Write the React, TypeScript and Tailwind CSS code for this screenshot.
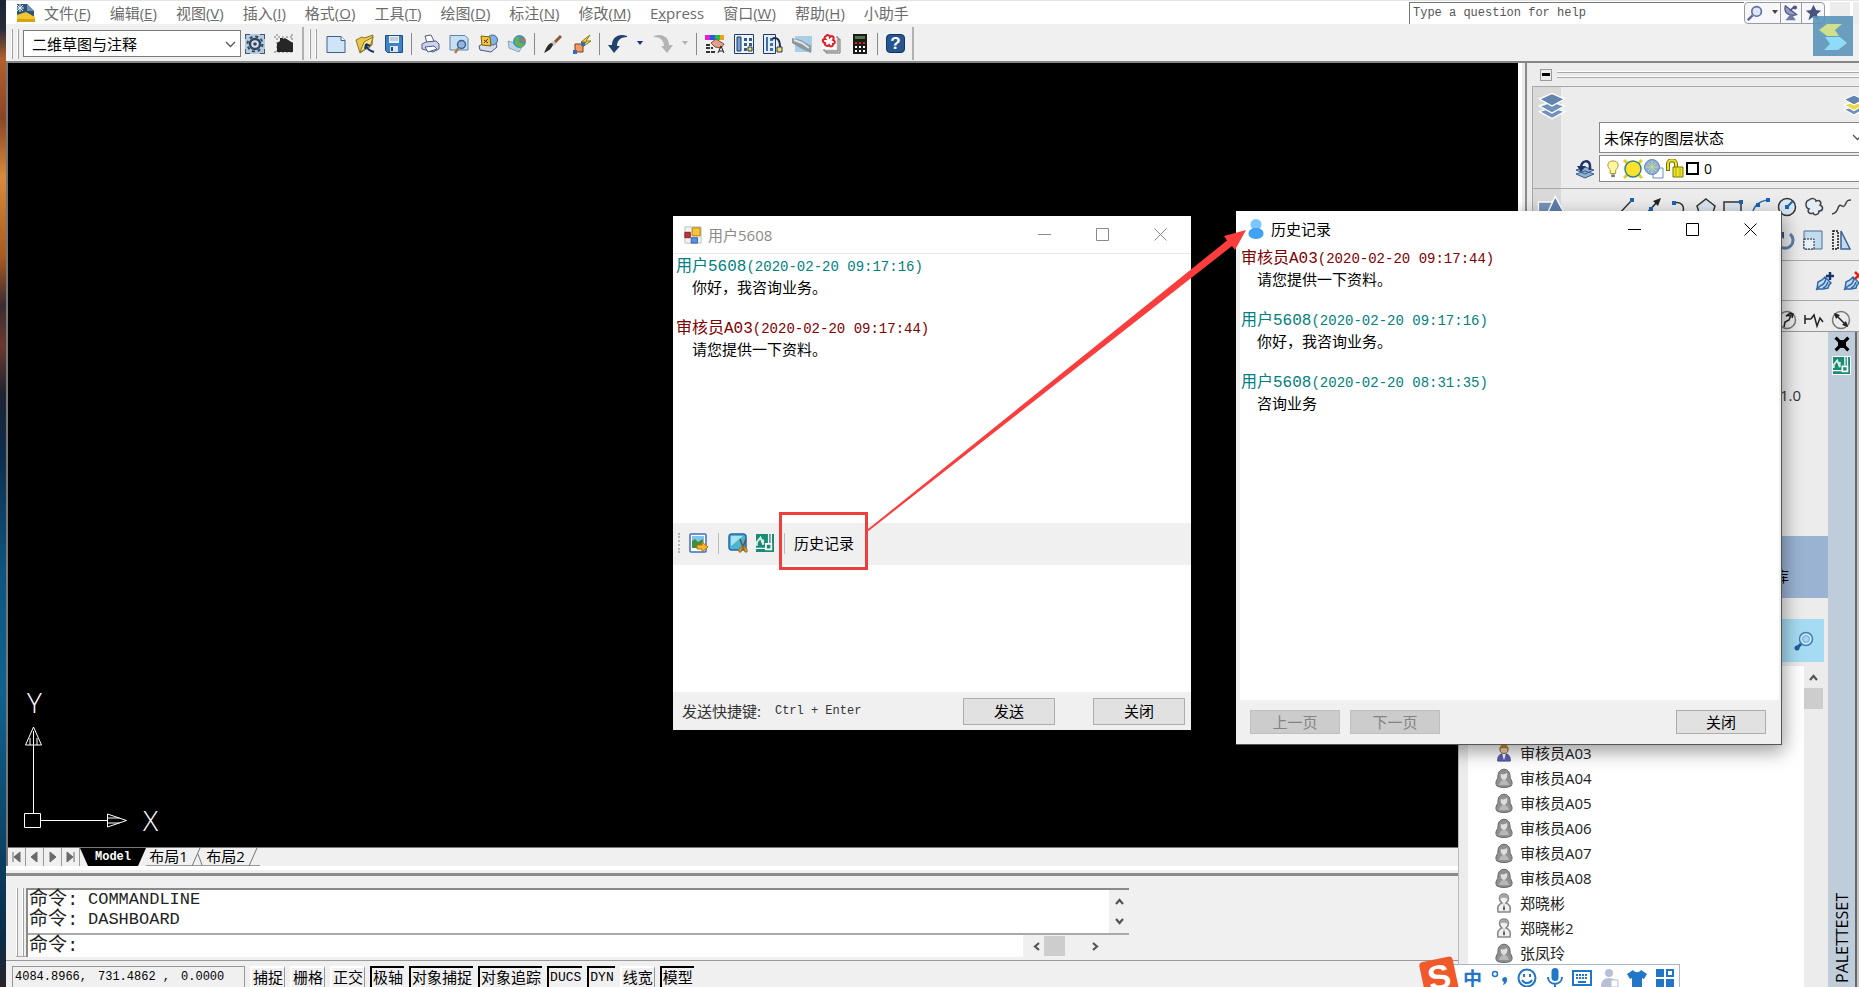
import React, { useState } from "react";

const menus = [
  { label: "文件", key: "F" },
  { label: "编辑", key: "E" },
  { label: "视图", key: "V" },
  { label: "插入", key: "I" },
  { label: "格式", key: "O" },
  { label: "工具", key: "T" },
  { label: "绘图", key: "D" },
  { label: "标注", key: "N" },
  { label: "修改", key: "M" },
  { label: "Express", key: "" },
  { label: "窗口", key: "W" },
  { label: "帮助", key: "H" },
  { label: "小助手", key: "" },
];

const statusToggles = [
  { label: "捕捉", on: false },
  { label: "栅格", on: false },
  { label: "正交", on: false },
  { label: "极轴", on: true },
  { label: "对象捕捉", on: true },
  { label: "对象追踪", on: true },
  { label: "DUCS", on: true },
  { label: "DYN", on: true },
  { label: "线宽", on: false },
  { label: "模型", on: true },
];

const contacts = [
  { name: "审核员A03", kind: "online" },
  { name: "审核员A04", kind: "female" },
  { name: "审核员A05", kind: "female" },
  { name: "审核员A06", kind: "female" },
  { name: "审核员A07", kind: "female" },
  { name: "审核员A08", kind: "female" },
  { name: "郑晓彬", kind: "male" },
  { name: "郑晓彬2", kind: "male" },
  { name: "张凤玲", kind: "female" },
];

interface Message {
  from: string;
  time: string;
  text: string;
  staff: boolean;
}

const chatMessages: Message[] = [
  { from: "用户5608", time: "(2020-02-20 09:17:16)", text: "你好，我咨询业务。", staff: false },
  { from: "审核员A03", time: "(2020-02-20 09:17:44)", text: "请您提供一下资料。", staff: true },
];

const historyMessages: Message[] = [
  { from: "审核员A03", time: "(2020-02-20 09:17:44)", text: "请您提供一下资料。", staff: true },
  { from: "用户5608", time: "(2020-02-20 09:17:16)", text: "你好，我咨询业务。", staff: false },
  { from: "用户5608", time: "(2020-02-20 08:31:35)", text: "咨询业务", staff: false },
];

const sans = "font-['Open_Sans','Noto_Sans_CJK_SC',sans-serif]";
const mono = "font-['Liberation_Mono','Noto_Sans_CJK_SC',monospace]";

const Icon = ({ size = 20, children }: { size?: number; children: React.ReactNode }) => (
  <svg width={size} height={size} viewBox="0 0 20 20" fill="none" className="shrink-0">
    {children}
  </svg>
);

// ---------- toolbar icons ----------
const NewIcon = () => (
  <Icon>
    <path d="M1 2.5h14l4 4v12H1z" fill="#cfe4f7" stroke="#3f628c" />
    <path d="M15 2.5v4h4" fill="#fff" stroke="#3f628c" />
  </Icon>
);
const OpenIcon = () => (
  <Icon>
    <path d="M1 6l6-3 2 1 9-3-1 10-12 8z" fill="#e9c84a" stroke="#8a742a" />
    <path d="M5 18L9 8l9-5-3 10z" fill="#f7e48a" stroke="#8a742a" />
    <path d="M11 11c1 4 4 6 8 7M11 10l-1 5m1-5l4 2" stroke="#1c355e" strokeWidth="2" />
  </Icon>
);
const SaveIcon = () => (
  <Icon>
    <path d="M1.500 1.500h17v17h-15l-2-2z" fill="#3c82c4" stroke="#1d4f85" />
    <path d="M5 2h10v7H5z" fill="#e8f2fb" />
    <path d="M6 4h8M6 6h8" stroke="#9ab" />
    <path d="M6 12h8v6H6z" fill="#dde6ef" />
    <path d="M7 13h2v4H7z" fill="#1d4f85" />
  </Icon>
);
const PrintIcon = () => (
  <Icon>
    <path d="M5 2l6-1 3 6-7 2z" fill="#fff" stroke="#4d5a86" />
    <path d="M2 10l4-2 10-1 3 3v5l-6 3-11-3z" fill="#cdd4ee" stroke="#4d5a86" />
    <path d="M5 13l9-1 3 3-9 3z" fill="#fff" stroke="#4d5a86" />
  </Icon>
);
const PreviewIcon = () => (
  <Icon>
    <path d="M1 1.500h15l3 3V16H1z" fill="#c7e0f5" stroke="#5c84ac" />
    <circle cx="12.500" cy="10.500" r="4" fill="#8fb8e2" stroke="#3f628c" strokeWidth="1.500" />
    <path d="M9.500 14L6 19" stroke="#b07a4a" strokeWidth="2.500" />
  </Icon>
);
const PublishIcon = () => (
  <Icon>
    <path d="M1 12l5-3h12l1 4-6 5-11-2z" fill="#d7dcec" stroke="#4d5a86" />
    <circle cx="14.500" cy="6" r="5" fill="#7fb5e6" stroke="#3d668f" />
    <path d="M3 2l9 1 1 9-9-1z" fill="#f4c637" stroke="#7a6010" />
    <path d="M6 6l4 3M10 5l-4 4" stroke="#4a3a08" />
  </Icon>
);
const GlobeIcon = () => (
  <Icon>
    <path d="M1 7l10 3 7-3-6 11-10-4z" fill="#bdd4e8" stroke="#8ba7c4" />
    <circle cx="12.500" cy="7.500" r="6.500" fill="#3f96bd" />
    <path d="M8 4c3-3 5 0 4 3s4 1 5 4c-3 4-6 2-9-1z" fill="#6bb04c" />
    <path d="M14 3l4 2v3l-4-1z" fill="#c76a3c" />
  </Icon>
);
const BrushIcon = () => (
  <Icon>
    <path d="M18 2L9 11" stroke="#8d5a33" strokeWidth="3" />
    <path d="M12 8l-3 3" stroke="#c9c9c9" strokeWidth="4" />
    <path d="M10 10c-1 5-5 7-9 9 2-4 3-8 7-10z" fill="#2b2b2b" />
  </Icon>
);
const MatchIcon = () => (
  <Icon>
    <path d="M18 1l-9 7h5l-5 6 10-7h-5z" fill="#ffd93a" stroke="#8f7414" />
    <path d="M3 10h8v8H3z" fill="#f59a5e" stroke="#7c3d1b" />
    <path d="M1 16h4v4H1zM9 8h4v4H9z" fill="#2e6fc0" />
  </Icon>
);
const UndoIcon = ({ flip = false }: { flip?: boolean }) => (
  <Icon>
    <g transform={flip ? "translate(20 0) scale(-1 1)" : undefined}>
      <path d="M19 2C10-1 4 4 4 11H0l6 8 6-7H9c0-5 3-9 10-9z" fill={flip ? "#b4b4b4" : "#24416e"} />
    </g>
  </Icon>
);
const DropArrow = ({ color }: { color: string }) => (
  <svg width="8" height="5" viewBox="0 0 8 5">
    <path d="M1 0h6L4 4z" fill={color} />
  </svg>
);
const PropertiesIcon = () => (
  <Icon>
    <path d="M0 1h5v5H0z" fill="#e21fd2" />
    <path d="M5 1h5v5H5z" fill="#2b58e0" />
    <path d="M10 1h5v5h-5z" fill="#23bd45" />
    <path d="M15 1h4v5h-4z" fill="#f0a21f" />
    <path d="M6 9l5-4 8 5-3 4-6-1z" fill="#e0a08c" stroke="#8b4d3c" />
    <path d="M1 11h5M1 14h7M1 18h9" stroke="#333" strokeWidth="2" strokeDasharray="4 1" />
    <path d="M13 19l3-7 3 7m-5-2h4" stroke="#222" />
  </Icon>
);
const DesignCenterIcon = () => (
  <Icon>
    <path d="M.5.5h19v19H.5z" fill="#eef4fb" stroke="#223b63" />
    <path d="M3 3h4v14H3z" fill="#6f9dd0" stroke="#223b63" />
    <path d="M10 4h3v3h-3zM15 4h3v3h-3zM10 9h3v3h-3zM15 9h3v3h-3zM10 14h3v3h-3z" fill="#3a5a8a" />
    <path d="M14 13h4v4h-4z" fill="#f1df58" stroke="#223b63" />
  </Icon>
);
const ToolPaletteIcon = () => (
  <Icon>
    <path d="M.5.5h12v19H.5z" fill="#e4eefa" stroke="#223b63" />
    <path d="M3 3h2v14H3z" fill="#3e6fae" />
    <path d="M7 4h3v3H7zM7 9h3v3H7zM7 14h3v3H7z" fill="#3e6fae" />
    <path d="M9 5c5-3 8 1 8 8" stroke="#1d2f52" strokeWidth="2" />
    <path d="M14 13h5v5h-5z" fill="#f1df58" stroke="#223b63" />
  </Icon>
);
const SheetSetIcon = () => (
  <Icon>
    <path d="M3 2h17v16H3z" fill="#a9cfe6" />
    <path d="M0 4l9 2 10 6v7l-9-4-10-6z" fill="#8d979d" />
    <path d="M2 6l8 3 7 5" stroke="#dde3e6" strokeWidth="2" />
  </Icon>
);
const MarkupIcon = () => (
  <Icon>
    <path d="M5 5h14v14H5z" fill="#d5d5d5" stroke="#777" />
    <path d="M3 3h14v14H3z" fill="#e8e8e8" stroke="#777" />
    <path d="M1 1h14v14H1z" fill="#fff" />
    <path d="M5 2c2-2 4 0 4 1 2-2 5 0 3 3 3 1 2 4 0 4 0 3-3 3-4 1-2 2-5 0-4-2-3-1-3-4 0-4-1-1 0-3 1-3z" stroke="#e01f2a" strokeWidth="2" />
  </Icon>
);
const CalcIcon = () => (
  <Icon>
    <path d="M3 0h14v20H3z" fill="#1a1a1a" />
    <path d="M5 2h10v3H5z" fill="#4f7a45" />
    <path d="M5 8h2v2H5zM9 8h2v2H9zM13 8h2v2h-2z" fill="#d3262d" />
    <path d="M5 12h2v2H5zM9 12h2v2H9zM13 12h2v2h-2zM5 16h2v2H5zM9 16h2v2H9zM13 16h2v2h-2z" fill="#fff" />
  </Icon>
);
const HelpIcon = () => (
  <span className="flex h-[19px] w-[19px] items-center justify-center rounded-sm border border-[#12335f] bg-[#27558f] font-['Liberation_Sans',sans-serif] text-[17px] font-bold leading-none text-white">
    ?
  </span>
);
const CadIcon = ({ size = 18 }: { size?: number }) => (
  <Icon size={size}>
    <path d="M0 0h20v20H0z" fill="#1c8a74" />
    <path d="M1 13V9l4-5 3 8V6" stroke="#d6f3ea" strokeWidth="2" />
    <path d="M0 16h10M14 0v10M17 0v10" stroke="#fff" strokeWidth="1.500" />
    <path d="M11 11h6v6h-6z" fill="#1c8a74" stroke="#fff" strokeWidth="2" />
  </Icon>
);

const toolbarItems: { id: string; icon?: React.ReactNode }[] = [
  { id: "新建", icon: <NewIcon /> },
  { id: "打开", icon: <OpenIcon /> },
  { id: "保存", icon: <SaveIcon /> },
  { id: "sep1" },
  { id: "打印", icon: <PrintIcon /> },
  { id: "打印预览", icon: <PreviewIcon /> },
  { id: "发布", icon: <PublishIcon /> },
  { id: "三维DWF", icon: <GlobeIcon /> },
  { id: "sep2" },
  { id: "特性匹配", icon: <BrushIcon /> },
  { id: "块编辑器", icon: <MatchIcon /> },
  { id: "sep3" },
  { id: "放弃", icon: <UndoIcon /> },
  { id: "drop-undo", icon: <DropArrow color="#1c2f80" /> },
  { id: "重做", icon: <UndoIcon flip /> },
  { id: "drop-redo", icon: <DropArrow color="#b4b4b4" /> },
  { id: "sep4" },
  { id: "特性", icon: <PropertiesIcon /> },
  { id: "设计中心", icon: <DesignCenterIcon /> },
  { id: "工具选项板", icon: <ToolPaletteIcon /> },
  { id: "图纸集", icon: <SheetSetIcon /> },
  { id: "标记集", icon: <MarkupIcon /> },
  { id: "计算器", icon: <CalcIcon /> },
  { id: "sep5" },
  { id: "帮助", icon: <HelpIcon /> },
];

const Grip = () => (
  <div className="flex h-[30px] gap-1">
    <div className="w-[2px] border-r border-[#a0a0a0] bg-white" />
    <div className="w-[2px] border-r border-[#a0a0a0] bg-white" />
  </div>
);

const Chevron = ({ className = "", bold = false }: { className?: string; bold?: boolean }) => (
  <svg width="11" height="7" viewBox="0 0 11 7" fill="none" className={className}>
    <path d={bold ? "M2 1l3.500 4L9 1" : "M1 1l4.500 4.500L10 1"} stroke="#555" strokeWidth={bold ? 2.2 : 1.3} />
  </svg>
);

const MenuBar = () => (
  <header className="flex h-6 items-center border-t border-[#e4e4e4] bg-white">
    <svg width="20" height="20" viewBox="0 0 20 20" className="ml-[10px] mr-2">
      <path d="M1 1h10l7 7v10H1z" fill="#2d5376" />
      <path d="M11 1l7 7h-7z" fill="#6d93b3" />
      <path d="M4 1v8M0 5h8M1 2l6 6M7 2L1 8" stroke="#e5f2fb" />
      <path d="M1 12l9-3 9 5v5H1z" fill="#f3c62e" />
      <path d="M1 16h18v3H1z" fill="#d9a012" />
    </svg>
    <nav className="flex gap-[19px]">
      {menus.map((menu) => (
        <button key={menu.label} className={`${sans} whitespace-nowrap text-[15px] leading-5 text-[#6b6b6b]`}>
          {menu.label === "Express" ? (
            <>E<u>x</u>press</>
          ) : (
            menu.label
          )}
          {menu.key && <>(<u>{menu.key}</u>)</>}
        </button>
      ))}
    </nav>
    <div className="ml-auto flex h-[22px] items-stretch">
      <input
        aria-label="Help search"
        defaultValue="Type a question for help"
        className={`${mono} w-[335px] border-l border-t border-[#777] bg-white pl-[3px] text-[12px] text-[#555] outline-none`}
      />
      <div className="flex w-[81px] overflow-hidden rounded border border-[#9a9aa6] bg-[#f7f7fa]">
        <button aria-label="Search" className="flex w-9 items-center justify-center gap-2 border-r border-[#9a9aa6]">
          <Icon size={16}>
            <circle cx="12" cy="8" r="6" fill="#dfe6f8" stroke="#5d6a9c" strokeWidth="2" />
            <path d="M7 13l-6 6" stroke="#5d6a9c" strokeWidth="3" />
          </Icon>
          <DropArrow color="#444" />
        </button>
        <button aria-label="Communication" className="flex w-[21px] items-center justify-center border-r border-[#9a9aa6]">
          <Icon size={16}>
            <path d="M3 1c-3 9 5 14 14 11z" fill="#8f9cc4" stroke="#4a5687" strokeWidth="1.500" />
            <path d="M9 7l5-5" stroke="#4a5687" strokeWidth="2" />
            <circle cx="15" cy="3" r="2.500" fill="#4a5687" />
            <path d="M8 13l-5 6h13l-4-6z" fill="#6d7bab" />
          </Icon>
        </button>
        <button aria-label="Favorites" className="flex flex-1 items-center justify-center">
          <Icon size={17}>
            <path d="M10 1l3 6 6 1-5 4 2 7-6-4-6 4 2-7-5-4 6-1z" fill="#46557f" />
          </Icon>
        </button>
      </div>
      <div className="ml-[5px] flex w-[29px] gap-[3px]">
        <div className="w-5 bg-[#ececec]" />
        <div className="flex-1 bg-[#ececec]" />
      </div>
    </div>
  </header>
);

const Toolbar = () => (
  <div className="flex h-[39px] items-center border-b-2 border-[#868686] bg-[#f0f0f0] pl-[5px] pt-[2px]">
    <Grip />
    <div className="relative ml-1 w-[218px]">
      <select
        aria-label="工作空间"
        className={`${sans} h-[27px] w-full appearance-none border border-[#7a7a7a] bg-white pl-2 text-[15px] leading-5 text-black outline-none`}
      >
        <option>二维草图与注释</option>
      </select>
      <Chevron className="pointer-events-none absolute right-[5px] top-[11px]" />
    </div>
    <div className="flex h-[33px] items-center gap-[9px] border-r-2 border-[#b0b0b0] pl-1 pr-2">
      <button aria-label="工作空间设置">
        <Icon>
          <path d="M0 0h20v20H0z" fill="#b3cbe2" />
          <path d="M0 5V0h5M15 0h5v5M20 15v5h-5M5 20H0v-5" stroke="#47586c" strokeWidth="2" />
          <circle cx="10" cy="10" r="5" fill="#d8e6f3" stroke="#33465c" strokeWidth="2.500" />
          <circle cx="10" cy="10" r="7.500" stroke="#33465c" strokeWidth="2" strokeDasharray="3 2.900" />
          <circle cx="10" cy="10" r="1.800" fill="#33465c" />
        </Icon>
      </button>
      <button aria-label="我的工作空间">
        <Icon>
          <path d="M0 3h20M0 18h20M3 0v20M18 0v20" stroke="#777" strokeDasharray="2 2" />
          <path d="M3 9l3-2V4h3v1l2-1 8 5v9H3z" fill="#262626" />
        </Icon>
      </button>
    </div>
    <div className="ml-[5px] flex h-[33px] items-center border-r-2 border-[#b0b0b0] pr-[2px]">
      <Grip />
      <div className="ml-1 flex items-center">
        {toolbarItems.map((item) =>
          !item.icon ? (
            <div key={item.id} className="flex w-[7px] justify-center">
              <div className="h-[22px] w-px bg-[#8a8a8a]" />
            </div>
          ) : (
            <button
              key={item.id}
              aria-label={item.id}
              className={`flex h-[29px] items-center justify-center ${item.id.startsWith("drop") ? "w-4" : "w-[29px]"}`}
            >
              {item.icon}
            </button>
          )
        )}
      </div>
    </div>
  </div>
);

const LayersIcon = ({ size, accent = "#6f92bd" }: { size: number; accent?: string }) => (
  <Icon size={size}>
    <path d="M1 14l9-3 9 3-9 5z" fill="#6f92bd" stroke="#fff" />
    <path d="M1 10l9-3 9 3-9 5z" fill={accent} stroke="#fff" />
    <path d="M1 5l9-4 9 4-9 5z" fill="#6384ad" stroke="#fff" />
  </Icon>
);

const drawTools: React.ReactNode[] = [
  <><path d="M2 19L17 3" stroke="#333" strokeWidth="1.500" /><path d="M15 1h4v4h-4z" fill="#1c64b4" /></>,
  <><path d="M2 19L17 3" stroke="#222" strokeWidth="1.500" /><path d="M19 1l-8 3 5 5z" fill="#222" /><path d="M7 10h4v4H7z" fill="#1c64b4" /></>,
  <><path d="M5 6c7-2 12 3 8 11" stroke="#333" strokeWidth="1.500" /><path d="M3 4h4v4H3z" fill="#1c64b4" /></>,
  <path d="M10 2l9 7-3 10H4L1 9z" stroke="#333" strokeWidth="1.500" fill="#dce6f0" />,
  <><path d="M1 5h17v13H1z" stroke="#333" strokeWidth="1.500" fill="#dce6f0" /><path d="M16 3h4v4h-4z" fill="#1c64b4" /></>,
  <><path d="M2 19C3 9 9 4 18 3" stroke="#2d6fb0" strokeWidth="1.500" /><path d="M16 1h4v4h-4zM6 6h4v4H6z" fill="#1c64b4" /></>,
  <><circle cx="10" cy="10" r="8.500" stroke="#333" strokeWidth="1.500" fill="#dbe8f5" /><path d="M10 10l6-6" stroke="#1c64b4" strokeWidth="2" /><path d="M8 8h4v4H8z" fill="#1c64b4" /></>,
  <path d="M5 3c3-3 7-1 7 1 4-2 6 2 4 4 4 2 3 6-1 6 0 4-5 5-6 2-4 2-6-2-4-4-4-1-4-8 0-9z" stroke="#444" strokeWidth="1.500" fill="#e3edf6" />,
  <path d="M1 17c6-1 5-5 7-8s4 3 6-1 2-5 6-5" stroke="#444" strokeWidth="1.500" />,
];

const Dashboard = () => (
  <aside className="flex w-[341px] shrink-0 border-l-4 border-white bg-[#ececec]">
    <div className="w-[5px] border-r-2 border-[#8a8a8a]" />
    <div className="flex min-w-0 flex-1 flex-col pl-[5px]">
      <div className="flex h-[23px] items-center gap-[5px] pl-2">
        <button aria-label="折叠" className="flex h-3 w-3 items-center justify-center border border-[#999]">
          <span className="h-[3px] w-2 bg-black" />
        </button>
        <div className="flex h-[7px] flex-1 flex-col justify-between">
          <div className="h-[2px] border-b border-[#aaa] bg-white" />
          <div className="h-[2px] border-b border-[#aaa] bg-white" />
        </div>
      </div>
      {/* Layers */}
      <section className="flex h-[102px] border-l border-t border-[#a8a8a8]">
        <div className="w-7 shrink-0 bg-[#d9d9d9] pl-[5px] pt-[5px]">
          <LayersIcon size={28} />
        </div>
        <div className="flex min-w-0 flex-1 flex-col overflow-hidden">
          <div className="flex h-[35px] items-center justify-end">
            <div className="-mr-[6px] h-[22px]"><LayersIcon size={22} accent="#f2d83c" /></div>
          </div>
          <div className="flex flex-col gap-[2px]">
            <div className="relative ml-[38px]">
              <select aria-label="图层状态" className={`${sans} h-[31px] w-full appearance-none border border-r-0 border-[#888] bg-white pl-1 text-[15px] leading-5 text-black outline-none`}>
                <option>未保存的图层状态</option>
              </select>
              <Chevron className="pointer-events-none absolute -right-1 top-3" />
            </div>
            <div className="flex items-center">
              <div className="flex w-[38px] justify-center pl-[10px]">
                <Icon>
                  <path d="M1 15l9-3 9 3-9 4zM1 11l9-3 9 3-9 4z" fill="#8fb0d2" stroke="#3c5f88" />
                  <path d="M6 9c0-8 9-9 9-2v4" stroke="#1d3566" strokeWidth="2.500" />
                  <path d="M2 7h9l-5 6z" fill="#1d3566" />
                </Icon>
              </div>
              <button aria-label="当前图层" className={`${sans} flex h-[27px] flex-1 items-center gap-[1px] border border-r-0 border-[#888] bg-white pl-1`}>
                <Icon size={18}>
                  <path d="M10 1c-7 0-7 7-3 10v4h6v-4c4-3 4-10-3-10z" fill="#fff7a0" stroke="#a08d20" />
                  <path d="M8 16h4v3H8z" fill="#777" />
                </Icon>
                <Icon>
                  <path d="M1 1l4 4M19 1l-4 4M1 19l4-4M19 19l-4-4" stroke="#e0d020" strokeWidth="3" />
                  <circle cx="10" cy="10" r="8" fill="#fbe32c" stroke="#3a8088" strokeWidth="1.500" />
                </Icon>
                <Icon>
                  <path d="M9 9h10v10H9z" fill="#fff" stroke="#6c8fc0" />
                  <circle cx="8" cy="8" r="7.500" fill="#8fb0d6" stroke="#6287b8" />
                  <path d="M8 2v12M2 8h12M4 4l8 8M12 4l-8 8" stroke="#cadb8a" />
                </Icon>
                <Icon>
                  <path d="M3 12V5c0-5 8-5 8 0v4" stroke="#77730a" strokeWidth="4" />
                  <path d="M3 11V5c0-5 8-5 8 0v4" stroke="#e8e22e" strokeWidth="2" />
                  <path d="M8 8h10v10H8z" fill="#e8e22e" stroke="#77730a" />
                  <path d="M11 8v10M15 8v10" stroke="#b5b000" />
                </Icon>
                <span className="h-[13px] w-[13px] border-2 border-black bg-white" />
                <span className="pl-1 text-[14px] leading-5 text-black">0</span>
              </button>
            </div>
          </div>
        </div>
      </section>
      {/* Draw and modify */}
      <section className="flex h-[72px] overflow-hidden border-l border-t border-[#a8a8a8]">
        <div className="w-7 shrink-0 bg-[#d9d9d9] pl-1 pt-[6px]">
          <Icon size={28}>
            <path d="M1 5h10v12H1z" fill="#7793b8" stroke="#fff" />
            <path d="M13 1l7 13H7z" fill="#5f7fab" stroke="#fff" />
          </Icon>
        </div>
        <div className="flex flex-col gap-[13px] pl-[54px] pt-2">
          <div className="flex gap-[7px]">
            {drawTools.map((shape, i) => (
              <Icon key={i}>{shape}</Icon>
            ))}
          </div>
          <div className="flex justify-end gap-2">
            <Icon>
              <path d="M5 4a8 8 0 1 0 10 0" stroke="#5d7fae" strokeWidth="3" />
              <path d="M1 2h8v7z" fill="#34527f" />
            </Icon>
            <Icon>
              <path d="M1 1h18v18H1z" fill="#c3dbef" stroke="#4a6c94" />
              <path d="M1 9h10v10H1z" fill="#e8f1f8" stroke="#222" strokeDasharray="2 1" />
            </Icon>
            <Icon>
              <path d="M2 1h5v18H2z" stroke="#111" strokeWidth="1.500" strokeDasharray="2 1" />
              <path d="M10 1l9 18h-9z" fill="#c3dbef" stroke="#3e6290" strokeWidth="1.500" />
            </Icon>
          </div>
        </div>
      </section>
      <section className="-mr-1 flex h-10 items-center justify-end gap-2 overflow-hidden border-t border-[#a8a8a8]">
        {["#16336b", "#e02020"].map((color) => (
          <Icon key={color}>
            <path d="M2 18l1-7 4-2 3-3 6 6-2 2-1 3-5 1z" fill="#c4dcf2" stroke="#2f68a8" strokeWidth="1.500" />
            <path d="M5 15c3-1 5-3 6-7M8 17c3-1 4-3 5-6M1 19l4-4" stroke="#2f68a8" strokeWidth="1.500" />
            {color === "#16336b" ? (
              <path d="M15 1v8M11 5h8" stroke={color} strokeWidth="2.500" />
            ) : (
              <path d="M12 1l7 7M19 1l-7 7" stroke={color} strokeWidth="2.500" />
            )}
          </Icon>
        ))}
      </section>
      <section className="flex h-8 items-center justify-end gap-[7px] border-t border-[#a8a8a8] pr-2 pt-[7px]">
        <Icon>
          <circle cx="10" cy="10" r="8.500" stroke="#777" strokeWidth="1.500" />
          <path d="M7 17l1-5 4-2 2-5-5 1 4-3 3 1-1 4" stroke="#222" strokeWidth="1.500" />
        </Icon>
        <Icon>
          <path d="M1 5v9M1 9h6M7 9l3-4 3 11 3-8 3 4" stroke="#222" strokeWidth="1.500" />
        </Icon>
        <Icon>
          <circle cx="10" cy="10" r="8.500" stroke="#777" strokeWidth="1.500" />
          <path d="M4 4l12 12" stroke="#222" strokeWidth="1.500" />
          <path d="M3 3l6 2-4 4zM17 17l-6-2 4-4z" fill="#222" />
        </Icon>
      </section>
    </div>
  </aside>
);

const UcsIcon = () => (
  <svg width="168" height="168" viewBox="0 0 168 168" fill="none" stroke="#fff">
    <path d="M16.500 150.500h16v-14h-16zM25.500 136V68M25.500 50l-8 18h16zM25.500 54v14M22 61v7M29 61v7" />
    <path d="M33 143.500h66M99.500 137v13l19-6.500zM99.500 141h12M99.500 146h12" />
    <text x="19" y="36" stroke="none" fill="#fff" className="font-['Open_Sans',sans-serif] text-[28px] font-light">Y</text>
    <text x="135" y="154" stroke="none" fill="#fff" className="font-['Open_Sans',sans-serif] text-[28px] font-light">X</text>
  </svg>
);

const LayoutTabs = () => (
  <div className="flex h-[19px] border-t border-[#777] bg-[#f0f0f0]">
    {["M2 1v10M9 1v10L3 6z", "M8 1v10L2 6z", "M3 1v10l6-5z", "M9 1v10M2 1v10l6-5z"].map((d, i) => (
      <button key={i} aria-label={`tab-nav-${i}`} className="flex h-[18px] w-[18px] items-center justify-center border-r border-[#999]">
        <svg width="11" height="12" viewBox="0 0 11 12">
          <path d={d} fill="#6a6a6a" stroke="#6a6a6a" />
        </svg>
      </button>
    ))}
    <button className="flex h-[18px]">
      <svg width="8" height="18"><path d="M0 0h8v18z" fill="#000" /></svg>
      <span className={`${mono} w-[50px] bg-black text-center text-[12px] font-bold leading-[18px] text-white`}>Model</span>
      <svg width="8" height="18"><path d="M0 0h8L0 18z" fill="#000" /></svg>
    </button>
    {["布局1", "布局2"].map((tab) => (
      <button key={tab} className={`${sans} flex h-[18px] border-b border-[#999] text-[15px] leading-[17px] text-black`}>
        <span className="w-[45px] text-center">{tab}</span>
        <svg width="12" height="18" fill="none">
          <path d={tab === "布局2" ? "M9 0L1 18" : "M9 0L1 18M7 6l4 11"} stroke="#777" />
        </svg>
      </button>
    ))}
  </div>
);

const CommandLine = () => (
  <div className="flex border-t-[3px] border-[#8a8a8a] bg-[#f0f0f0] pb-[3px] pl-[10px] pt-3">
    <div className="flex w-[10px] gap-1 border-b border-[#aaa]">
      <div className="w-[2px] border-r border-[#a0a0a0] bg-white" />
      <div className="w-[2px] border-r border-[#a0a0a0] bg-white" />
    </div>
    <div className="w-[1103px] border-l-2 border-t-2 border-[#8a8a8a] bg-[#f0f0f0]">
      <div className="flex h-[45px] border-b-2 border-[#aaa]">
        <div className={`${mono} flex-1 bg-white pl-px text-[17px] leading-[20px] text-[#222]`}>
          {["COMMANDLINE", "DASHBOARD"].map((command) => (
            <p key={command} className="flex">
              <span className="w-[59px] whitespace-pre text-[19px]">命令:</span>
              {command}
            </p>
          ))}
        </div>
        <div className="flex w-5 flex-col items-center justify-between py-2">
          <Chevron bold className="rotate-180" />
          <Chevron bold />
        </div>
      </div>
      <div className="flex h-[22px]">
        <label htmlFor="command" className={`${mono} bg-white pl-px text-[19px] leading-[22px] text-[#222]`}>命令:</label>
        <input id="command" className="min-w-0 flex-1 bg-white outline-none" />
        <div className="flex w-[86px] items-center justify-between px-2">
          <Chevron bold className="rotate-90" />
          <div className="mr-6 h-5 w-[21px] bg-[#cdcdcd]" />
          <Chevron bold className="-rotate-90" />
        </div>
        <div className="w-5" />
      </div>
    </div>
  </div>
);

const StatusBar = () => (
  <footer className="flex h-[27px] border-t border-[#999] bg-[#f0f0f0] pl-[6px] pt-[5px]">
    <div className={`${mono} flex w-[233px] gap-[11px] border-l border-r border-t border-[#999] pl-[2px] text-[12px] leading-[20px] text-black`}>
      <span>4084.8966,</span>
      <span>731.4862 ,</span>
      <span>0.0000</span>
    </div>
    <div className="ml-[5px] flex gap-[5px]">
      {statusToggles.map((toggle) => (
        <button
          key={toggle.label}
          className={`whitespace-nowrap border-l-2 border-t-2 px-px leading-[19px] text-black ${
            toggle.on ? "border-black" : "border-r border-l-white border-r-[#999] border-t-white"
          } ${/[A-Z]/.test(toggle.label) ? "font-['Liberation_Mono',monospace] text-[13px]" : `${sans} text-[15px]`}`}
        >
          {toggle.label}
        </button>
      ))}
    </div>
  </footer>
);

const PersonIcon = ({ kind }: { kind: string }) => {
  if (kind === "online") {
    return (
      <Icon size={18}>
        <path d="M3 19c0-6 2-8 7-8s7 2 7 8z" fill="#5b62b5" stroke="#3e4487" />
        <path d="M8 11h4l-2 7z" fill="#fff" />
        <circle cx="10" cy="6" r="4.500" fill="#f5d3a8" stroke="#7b5a33" />
        <path d="M5 6c0-7 10-7 10 0-3-2-7-2-10 0z" fill="#c4882a" />
      </Icon>
    );
  }
  if (kind === "male") {
    return (
      <Icon size={20}>
        <path d="M4 19c-1-5 1-8 4-9-4-3-3-9 2-9s6 6 2 9c3 1 5 4 4 9z" fill="#f0f0f0" stroke="#888" strokeWidth="1.500" />
        <path d="M6 6c1-6 8-5 8 0-3-1-5-2-8 0z" fill="#a5a5a5" />
        <path d="M10 11l1 5-1 2-1-2z" fill="#444" />
      </Icon>
    );
  }
  return (
    <Icon size={20}>
      <path d="M3 18c-3-4 1-6 1-10C4-1 16-1 16 8c0 4 4 6 1 10-4 2-10 2-14 0z" fill="#909090" stroke="#666" />
      <path d="M5 17c1-4 3-5 5-5s4 1 5 5z" fill="#b8b8b8" />
      <path d="M7 6c2 1 4 0 6-1 1 4-1 7-3 7s-4-3-3-6z" fill="#dedede" />
    </Icon>
  );
};

const ContactPalette = () => (
  <aside className={`${sans} absolute bottom-0 right-0 top-[331px] flex w-[401px] border-t border-[#999] bg-[#ececec]`}>
    <div className="flex min-w-0 flex-1 flex-col border-l border-[#bbb]">
      <div className="flex h-[204px] items-start justify-end pr-[27px] pt-[53px] text-[15px] leading-5 text-[#333]">1.0</div>
      <div className="flex h-[62px] justify-end bg-[#9ab3d3] pr-[39px] pt-[30px] text-[15px] leading-5 text-black">库</div>
      <div className="ml-[9px] mr-1 mt-[21px] flex h-[43px] items-center justify-end bg-[#a6dcf3] pr-[10px]">
        <Icon>
          <circle cx="12" cy="8" r="6.500" fill="#d4ebfb" stroke="#3d7fb8" strokeWidth="1.500" />
          <circle cx="12" cy="8" r="3.500" fill="#a9d2f0" stroke="#6aa7d8" />
          <path d="M7 13l-4 4" stroke="#1d5d9c" strokeWidth="3" />
          <circle cx="3" cy="17" r="2.500" fill="#1d5d9c" />
        </Icon>
      </div>
      <div className="ml-[9px] mt-1 flex min-h-0 flex-1 overflow-hidden">
        <ul className="flex-1 bg-white pl-[26px] pt-[74px]">
          {contacts.map((contact) => (
            <li key={contact.name}>
              <button className="flex h-[25px] items-center text-[15px] leading-5 text-[#222]">
                <span className="flex w-5 justify-center"><PersonIcon kind={contact.kind} /></span>
                <span className="pl-[6px]">{contact.name}</span>
              </button>
            </li>
          ))}
        </ul>
        <div className="flex w-6 flex-col items-center pr-[5px] pt-2">
          <Chevron bold className="rotate-180" />
          <div className="mt-[7px] h-[21px] w-[19px] bg-[#cdcdcd]" />
        </div>
      </div>
    </div>
    <div className="flex w-[27px] flex-col items-center bg-[#bfccda] pt-1">
      <button aria-label="关闭选项板">
        <Icon size={16}>
          <path d="M2 2l16 16M18 2L2 18" stroke="#000" strokeWidth="4" />
          <path d="M5 5h10v10H5z" fill="#000" />
        </Icon>
      </button>
      <div className="mt-1 border border-white"><CadIcon size={17} /></div>
      <span className="mb-1 mt-auto rotate-180 text-[16px] leading-5 text-black [writing-mode:vertical-rl]">PALETTESET</span>
    </div>
    <div className="w-[4px] border-l-2 border-[#666] bg-[#c8c8c8]" />
  </aside>
);

const WindowButtons = ({ label, color }: { label: string; color: string }) => (
  <div className="ml-auto flex gap-[45px]">
    <button aria-label={`${label} 最小化`}>
      <svg width="13" height="13" fill="none"><path d="M0 6.500h13" stroke={color} /></svg>
    </button>
    <button aria-label={`${label} 最大化`}>
      <svg width="13" height="13" fill="none"><path d="M.5.5h12v12H.5z" stroke={color} /></svg>
    </button>
    <button aria-label={`${label} 关闭窗口`}>
      <svg width="13" height="13" fill="none"><path d="M.5.5l12 12M12.500.5l-12 12" stroke={color} /></svg>
    </button>
  </div>
);

const MessageList = ({ messages }: { messages: Message[] }) => (
  <div className="flex flex-col gap-4 pt-px">
    {messages.map((message) => (
      <div key={message.time} className={mono}>
        <p className={`whitespace-nowrap leading-[22px] ${message.staff ? "text-[#800000]" : "text-[#008080]"}`}>
          <span className="text-[16px]">{message.from}</span>
          <span className="text-[14px]">{message.time}</span>
        </p>
        <p className="pl-4 text-[15px] leading-6 text-black">{message.text}</p>
      </div>
    ))}
  </div>
);

const ChatWindow = ({ onHistory }: { onHistory: () => void }) => {
  const [draft, setDraft] = useState("");

  return (
    <section className={`${sans} absolute left-[673px] top-[216px] flex h-[514px] w-[518px] flex-col bg-white`}>
      <div className="flex h-[38px] items-center border-b border-[#e6e6e6] pl-[11px] pr-6">
        <Icon size={18}>
          <path d="M1 1h18v18H1z" fill="#f2f2f2" stroke="#bbb" />
          <path d="M9 2h9v9H9z" fill="#f6c437" stroke="#a77b12" />
          <path d="M1 7h6v6H1z" fill="#c6303a" stroke="#7d1a20" />
          <path d="M8 13h7v6H8z" fill="#5a92e6" stroke="#2e5aa3" />
        </Icon>
        <h2 className="pl-[6px] text-[15px] leading-5 text-[#8a8a8a]">用户5608</h2>
        <WindowButtons label="聊天" color="#8a8a8a" />
      </div>
      <div className="flex-1 pl-[3px] pt-px">
        <MessageList messages={chatMessages} />
      </div>
      <div className="flex h-[42px] items-center bg-[#f0f0f0] pb-[2px] pl-[5px]">
        <div className="mr-[9px] h-5 border-l-2 border-dotted border-[#b5b5b5]" />
        <button aria-label="发送图片">
          <Icon>
            <rect x="1" y="1" width="16" height="18" rx="1" fill="#fff" stroke="#3a6cc0" strokeWidth="1.500" />
            <path d="M3 3h12v8H3z" fill="#7fc3ef" />
            <path d="M3 8l3-2 3 3 5-3v9H3z" fill="#3f8f3a" />
            <path d="M8 12h5V9l6 5-6 5v-3H8z" fill="#f9b52c" stroke="#b8720c" />
          </Icon>
        </button>
        <div className="mx-[9px] h-[21px] w-px bg-[#bbb]" />
        <button aria-label="截图">
          <Icon>
            <rect x="1" y="1" width="17" height="16" rx="3" fill="#48b6cf" stroke="#2b62ad" strokeWidth="1.500" />
            <path d="M3 3h12L3 13z" fill="#a8e2ee" />
            <path d="M12 6l3 8 3-8M15 12v3" stroke="#555" strokeWidth="1.500" />
            <path d="M15 13l-4 3v3h2zM15 13l4 3v3h-2z" fill="#e5a627" stroke="#a06a10" />
          </Icon>
        </button>
        <button aria-label="CAD" className="ml-2"><CadIcon /></button>
        <div className="ml-[10px] h-[21px] w-px bg-[#bbb]" />
        <button onClick={onHistory} className="pl-[9px] text-[15px] leading-5 text-black">历史记录</button>
      </div>
      <textarea
        aria-label="消息"
        value={draft}
        onChange={(e) => setDraft(e.target.value)}
        className="block h-[127px] resize-none bg-white outline-none"
      />
      <div className="flex h-[38px] items-center bg-[#f0f0f0] pl-[9px] pr-[6px]">
        <p className="flex items-center gap-[14px] text-[15px] leading-5 text-[#333]">
          <span>发送快捷键:</span>
          <span className="font-['Liberation_Mono',monospace] text-[12px]">Ctrl + Enter</span>
        </p>
        <button className="ml-auto h-[27px] w-[92px] border border-[#adadad] bg-[#e1e1e1] text-[15px] leading-5 text-black">发送</button>
        <button className="ml-[38px] h-[27px] w-[92px] border border-[#adadad] bg-[#e1e1e1] text-[15px] leading-5 text-black">关闭</button>
      </div>
    </section>
  );
};

const HistoryWindow = ({ onClose }: { onClose: () => void }) => (
  <section className={`${sans} absolute left-[1236px] top-[211px] flex h-[534px] w-[546px] flex-col border-b border-r border-[#555] bg-[#f0f0f0] shadow-[2px_6px_18px_rgba(0,0,0,0.4)]`}>
    <div className="flex h-9 items-center bg-white pl-[11px] pr-6">
      <svg width="18" height="20" viewBox="0 0 18 20">
        <circle cx="9" cy="5.500" r="5.500" fill="#7cc6ff" />
        <path d="M2 17c-2-5 2-8 7-8s9 3 7 8c-3 4-11 4-14 0z" fill="#3fa2f5" />
      </svg>
      <h2 className="pl-[6px] text-[15px] leading-5 text-black">历史记录</h2>
      <WindowButtons label="历史" color="#000" />
    </div>
    <div className="ml-1 mr-[2px] flex-1 bg-white pl-px">
      <MessageList messages={historyMessages} />
    </div>
    <div className="flex h-11 items-center gap-[10px] pl-[14px] pr-[15px]">
      <button disabled className="h-6 w-[90px] border border-[#bfbfbf] bg-[#cccccc] text-[15px] leading-5 text-[#838383]">上一页</button>
      <button disabled className="h-6 w-[90px] border border-[#bfbfbf] bg-[#cccccc] text-[15px] leading-5 text-[#838383]">下一页</button>
      <button onClick={onClose} className="ml-auto h-6 w-[90px] border border-[#adadad] bg-[#e1e1e1] text-[15px] leading-5 text-black">关闭</button>
    </div>
  </section>
);

const ImeBar = () => (
  <div className="absolute bottom-0 left-[1422px] flex h-[27px] items-end">
    <div className="relative z-10 flex h-9 w-[34px] -rotate-12 translate-y-2 items-center justify-center rounded bg-[#f1592a] font-['Liberation_Sans',sans-serif] text-[34px] font-bold leading-none text-white">
      S
    </div>
    <div className="-ml-1 flex h-[23px] w-[228px] items-center justify-between border border-b-0 border-[#a8b8cc] bg-white pl-[10px] pr-1 pt-1">
      <span className="font-['Noto_Sans_CJK_SC',sans-serif] text-[19px] font-bold leading-5 text-[#2176c7]">中</span>
      <Icon>
        <circle cx="5" cy="6" r="2.500" stroke="#2176c7" strokeWidth="1.500" />
        <path d="M15 9c4 1 2 7-2 8l1-3c-3-1-2-5 1-5z" fill="#2176c7" />
      </Icon>
      <Icon>
        <circle cx="10" cy="10" r="8.500" stroke="#2176c7" strokeWidth="2" />
        <path d="M7 6v3M13 6v3M5 12c2 4 8 4 10 0" stroke="#2176c7" strokeWidth="2" />
      </Icon>
      <Icon>
        <rect x="6.500" y="0" width="7" height="13" rx="3.500" fill="#2176c7" />
        <path d="M3 9c0 9 14 9 14 0M10 15v5" stroke="#2176c7" strokeWidth="2" />
      </Icon>
      <Icon>
        <path d="M1 3h18v14H1z" stroke="#2176c7" strokeWidth="2" />
        <path d="M4 7h12M4 10h12" stroke="#2176c7" strokeWidth="2" strokeDasharray="2 1" />
        <path d="M6 14h8" stroke="#2176c7" strokeWidth="2" />
      </Icon>
      <Icon>
        <circle cx="9" cy="5" r="4" fill="#b9bfd4" />
        <path d="M1 19c0-6 3-9 8-9s8 3 8 9z" fill="#b9bfd4" />
        <path d="M11 12h7v7h-7z" fill="#fff" stroke="#b9bfd4" />
      </Icon>
      <Icon>
        <path d="M6 2c2 3 6 3 8 0l6 4-3 5-2-1v9H5v-9l-2 1-3-5z" fill="#2176c7" />
      </Icon>
      <Icon>
        <path d="M1 1h8v8H1zM1 11h8v8H1zM11 11h8v8h-8z" fill="#2176c7" />
        <path d="M12 2h6v6h-6z" stroke="#2176c7" strokeWidth="2" />
      </Icon>
    </div>
  </div>
);

const App = () => {
  const [showHistory, setShowHistory] = useState(true);

  return (
    <div className="relative flex h-screen overflow-hidden bg-[#f0f0f0]">
      {/* Desktop wallpaper showing beside the CAD window */}
      <div className="w-[6px] shrink-0 bg-[linear-gradient(to_bottom,#1b2434_0%,#2a2c3a_3%,#b5602c_6%,#8a4526_12%,#d98a3a_18%,#a85a20_26%,#3a2a33_31%,#6a3a2e_35%,#1c2230_40%,#0d2c4c_46%,#0d5580_58%,#0f6290_70%,#0c4468_85%,#0a2c48_95%,#2a2228_100%)]" />
      <div className="flex min-w-0 flex-1 flex-col">
        <MenuBar />
        <Toolbar />
        <div className="flex min-h-0 flex-1">
          <div className="flex min-w-0 flex-1 flex-col border-l-2 border-[#777]">
            <main className="flex min-h-0 flex-1 items-end bg-black pb-[2px]">
              <UcsIcon />
            </main>
            <LayoutTabs />
          </div>
          <Dashboard />
        </div>
        <div className="h-[7px] border-t-4 border-white bg-[#f0f0f0]" />
        <CommandLine />
        <StatusBar />
      </div>

      <ContactPalette />
      <ChatWindow onHistory={() => setShowHistory(true)} />
      {showHistory && <HistoryWindow onClose={() => setShowHistory(false)} />}
      <ImeBar />

      {/* Callout from the toolbar button to the history window */}
      <div className="pointer-events-none absolute left-[779px] top-[512px] h-[58px] w-[89px] border-[3px] border-[#ee3f3f]" />
      <svg width="400" height="320" viewBox="860 220 400 320" className="pointer-events-none absolute left-[860px] top-[220px]">
        <path d="M867.500 529.500L1227 240.500l-3-4.500L1246 230l-11 20-3-4L868.500 531z" fill="#fb3d3d" />
      </svg>

      <div className="absolute right-[6px] top-4 h-10 w-10 bg-[#5b93b8]/90">
        <svg width="40" height="40" viewBox="0 0 40 40">
          <path d="M14 8h15l-7 6 4 6H14l-8-6z" fill="#cfe08a" />
          <path d="M12 21h15l7 6-9 7H11l6-6z" fill="#8fdcf8" />
        </svg>
      </div>
    </div>
  );
};

export default App;
